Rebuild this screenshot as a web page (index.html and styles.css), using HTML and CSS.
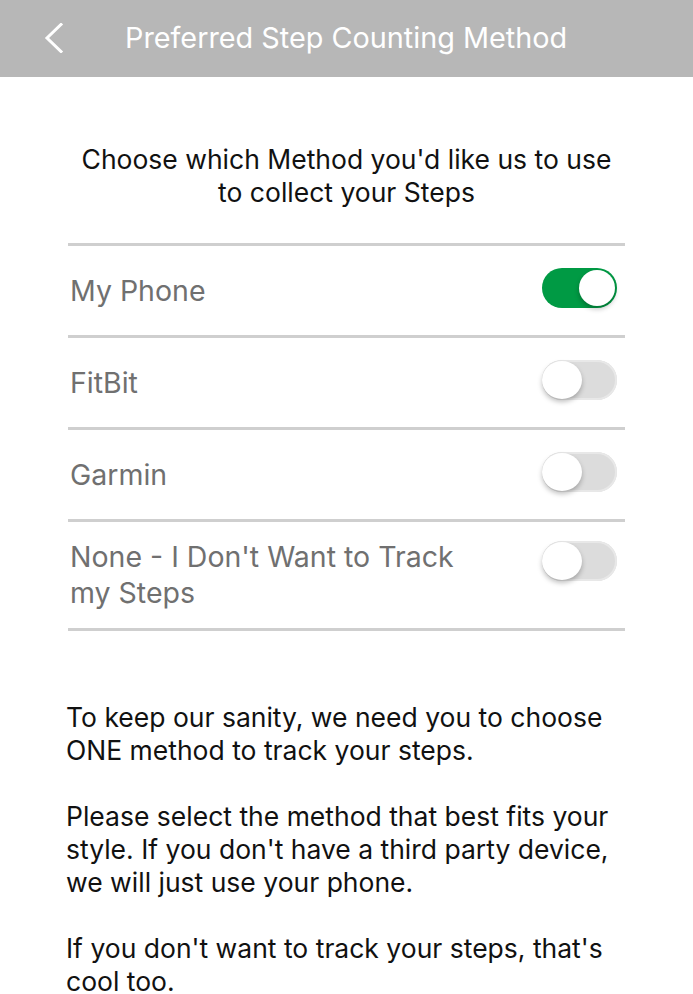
FILE: index.html
```html
<!DOCTYPE html>
<html lang="en">
<head>
	<title>Preferred Step Counting Method</title>
	<meta charset="utf-8">
	<meta name="viewport" content="width=device-width, initial-scale=1">
<link rel="stylesheet" href="styles.css">
</head>

  <body>
    <div class="header">
        <svg class="back" width="20" height="30" viewBox="0 0 20 30">
            <polyline points="17,1.5 3,15 17,28.5" fill="none" stroke="#fff" stroke-width="3" stroke-linecap="square" stroke-linejoin="miter"/>
        </svg>
        <div class="title">Preferred Step Counting Method</div>
    </div>

    <p class="intro">Choose which Method you'd like us to use<br/>to collect your Steps</p>

    <div class="methods">
        <div class="row">
            <span class="label">My Phone</span>
            <span class="switch on"></span>
        </div>
        <div class="row">
            <span class="label">FitBit</span>
            <span class="switch"></span>
        </div>
        <div class="row">
            <span class="label">Garmin</span>
            <span class="switch"></span>
        </div>
        <div class="row tall">
            <span class="label">None - I Don't Want to Track<br/>my Steps</span>
            <span class="switch"></span>
        </div>
    </div>

    <div class="notes">
        <p>To keep our sanity, we need you to choose ONE method to track your steps.</p>
        <p>Please select the method that best fits your style. If you don't have a third party device, we will just use your phone.</p>
        <p>If you don't want to track your steps, that's cool too.</p>
    </div>
  </body>

</html>
```

FILE: styles.css
```css
body {
	margin: 0;
	font-family: Inter, Roboto, "Liberation Sans", sans-serif;
	background: #fff;
	color: #111;
}

.header {
	height: 77px;
	background-color: #b7b7b7;
	display: flex;
	align-items: center;
	color: #fff;
}

.header .back {
	margin-left: 44px;
	margin-right: 61px;
	margin-top: -1px;
}

.header .title {
	font-size: 28.8px;
	margin-top: -3px;
}

.intro {
	margin: 66px 0 0;
	text-align: center;
	font-size: 26.5px;
	line-height: 33px;
	color: #111;
}

.methods {
	margin: 34px 68px 0;
	border-top: 3px solid #cfcfcf;
}

.row {
	display: flex;
	align-items: center;
	justify-content: space-between;
	height: 89px;
	border-bottom: 3px solid #cfcfcf;
	padding: 0 8px 0 2px;
}

.row.tall {
	height: 106px;
	align-items: flex-start;
}

.row .label {
	font-size: 28.5px;
	color: #707070;
	line-height: 36px;
}

.row.tall .label {
	margin-top: 17px;
}

.row.tall .switch {
	margin-top: 19px;
}

.switch {
	position: relative;
	width: 75px;
	height: 40px;
	border-radius: 20px;
	background-color: #dcdcdc;
	box-shadow: inset 0 0 0 2px #e8e8e8;
	margin-top: -6px;
}

.switch:after {
	content: "";
	position: absolute;
	top: 1px;
	left: 0;
	width: 40px;
	height: 38px;
	border-radius: 50%;
	background: #fff;
	box-shadow: 0 3px 5px rgba(0,0,0,.25);
}

.switch.on {
	background-color: #009a44;
	box-shadow: none;
}

.switch.on:after {
	top: 2px;
	left: auto;
	right: 2px;
	width: 36px;
	height: 36px;
}

.notes {
	margin: 70px 60px 0 66px;
	font-size: 26.5px;
	line-height: 33px;
	color: #111;
}

.notes p {
	margin: 0 0 33px;
}
```
